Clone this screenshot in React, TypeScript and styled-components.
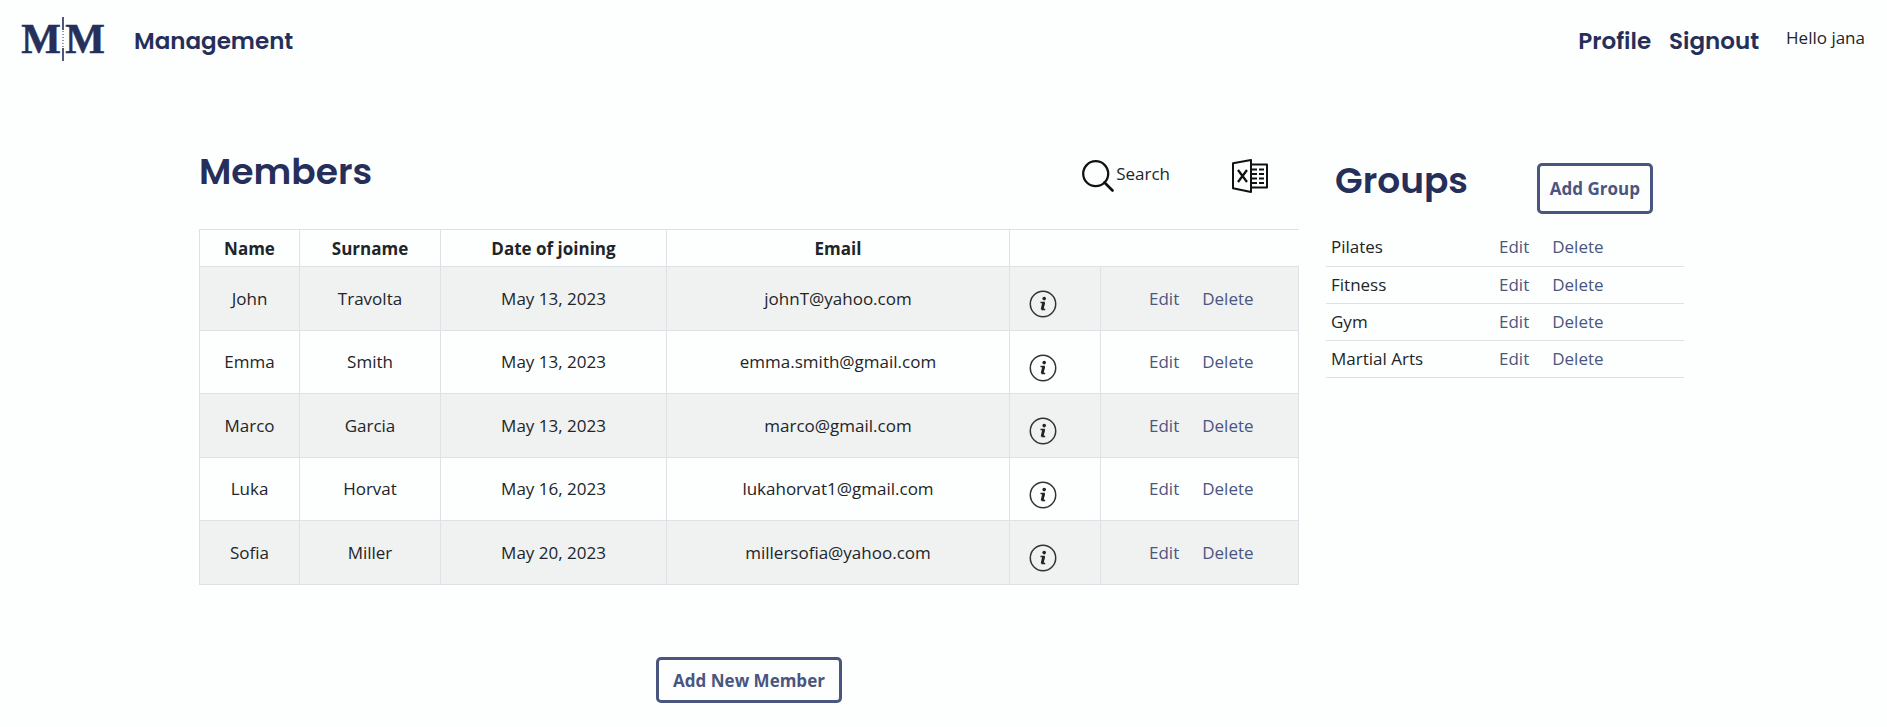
import React from "react";
import styled, { createGlobalStyle } from "styled-components";

const GlobalStyle = createGlobalStyle`
  *, *::before, *::after { box-sizing: border-box; }
  body {
    margin: 0;
    background: #fdfffe;
    color: #212529;
    font-family: "Segoe UI", "Open Sans", "Noto Sans", sans-serif;
    font-size: 17px;
    font-weight: 400;
    line-height: 28px;
  }
`;

const navy = "#262f5a";
const slate = "#4a5680";
const line = "#dee2e6";
const display = `Poppins, Inter, "Open Sans", sans-serif`;

const NavBar = styled.header`
  display: flex;
  align-items: center;
  height: 78px;
  padding: 0 22px 0 18px;
`;

const Nav = styled.nav`
  display: flex;
  flex: 1;
  align-items: center;
  justify-content: space-between;
  margin-left: 26px;
  padding-top: 4px;
`;

const NavGroup = styled.div`
  display: flex;
  gap: 18px;
`;

const NavLink = styled.a`
  color: ${navy};
  font-family: ${display};
  font-size: 23px;
  font-weight: 600;
  text-decoration: none;
`;

const Greeting = styled.span`
  margin-left: 27px;
  padding-bottom: 2px;
`;

const Page = styled.main`
  display: grid;
  grid-template-columns: minmax(0, 1100fr) minmax(0, 358fr);
  column-gap: 27px;
  max-width: 1489px;
  margin: 0 auto;
  padding: 69px 4px 0 0;
`;

const SectionHead = styled.div<{ $inset?: boolean }>`
  display: flex;
  align-items: flex-start;
  justify-content: space-between;
  height: 82px;
  padding: ${(p) => (p.$inset ? "16px 31px 0 9px" : "0 31px 0 0")};
`;

const Title = styled.h1`
  margin: 0;
  color: ${navy};
  font-family: ${display};
  font-size: 36px;
  font-weight: 600;
  line-height: 50px;
`;

const GroupsTitle = styled(Title)`
  line-height: 36px;
`;

const Tools = styled.div`
  display: flex;
  align-items: center;
  gap: 62px;
  padding-top: 8px;
`;

const ToolButton = styled.button`
  display: flex;
  align-items: center;
  gap: 2px;
  padding: 0;
  border: 0;
  background: none;
  color: inherit;
  font: inherit;
  cursor: pointer;

  svg { display: block; margin-top: 4px; }
`;

const OutlineButton = styled.button<{ $tall?: boolean }>`
  height: ${(p) => (p.$tall ? 51 : 46)}px;
  padding: 1px ${(p) => (p.$tall ? 10 : 14)}px 0;
  border: 3px solid ${slate};
  border-radius: 5px;
  background: transparent;
  color: ${slate};
  font: inherit;
  font-weight: 700;
  white-space: nowrap;
  cursor: pointer;
`;

const MembersTable = styled.table`
  width: 100%;
  border-collapse: collapse;
  table-layout: fixed;
  text-align: center;

  th {
    height: 37px;
    padding: 2px 0 0;
    border: 1px solid ${line};
    font-weight: 700;
  }
  th:last-child { border-right-color: transparent; }
  td {
    height: 64px;
    padding: 0;
    border: 1px solid ${line};
  }
  tbody tr:nth-child(odd) { background: #f0f1f1; }
  tbody tr:nth-child(even) td { height: 63px; }
`;

const Column = styled.col<{ $width?: number }>`
  width: ${(p) => (p.$width ? `${p.$width}px` : "auto")};
`;

const InfoButton = styled.button`
  display: block;
  margin: 11px 0 0 19px;
  padding: 0;
  border: 0;
  background: none;
  cursor: pointer;

  svg { display: block; }
`;

const Actions = styled.div<{ $indent?: number }>`
  display: flex;
  gap: 23px;
  padding-left: ${(p) => p.$indent ?? 0}px;
`;

const ActionLink = styled.a`
  color: ${slate};
  text-decoration: none;
`;

const AddRow = styled.div`
  display: flex;
  justify-content: center;
  padding: 72px 0 24px;
`;

const GroupsTable = styled.table`
  width: 100%;
  border-collapse: collapse;
  table-layout: fixed;

  td {
    height: 37px;
    padding: 0 0 0 5px;
    border-bottom: 1px solid ${line};
  }
`;

const LogoLink = styled.a`
  display: block;
  svg { display: block; }
`;

const Logo = () => (
  <LogoLink href="#" aria-label="Home">
    <svg width="90" height="46" viewBox="0 0 90 46" fill={navy} overflow="visible">
      <g
        fontFamily="'Liberation Serif', serif"
        fontWeight="700"
        fontSize="42"
        textAnchor="middle"
        stroke={navy}
        strokeWidth="0.5"
      >
        <text x="23" y="37">M</text>
        <text x="67" y="37">M</text>
      </g>
      <path d="M45 1v13M45 32v13" stroke={navy} strokeWidth="1.6" />
      <path d="M45 15v16" stroke={navy} strokeWidth="1.6" strokeDasharray="1 2" opacity=".6" />
    </svg>
  </LogoLink>
);

const SearchIcon = () => (
  <svg width="32" height="32" viewBox="0 0 32 32" fill="none" stroke="#111" strokeLinecap="round">
    <circle cx="13.7" cy="13.7" r="12.5" strokeWidth="2.3" />
    <path d="M22.5 22.5l8 8" strokeWidth="2.7" />
  </svg>
);

const SheetIcon = () => (
  <svg width="36" height="34" viewBox="0 0 36 34" fill="none" stroke="#111" strokeWidth="2">
    <path d="M1 4.2L19 1v32L1 29.2zM19 5.5h16v23H19" strokeLinejoin="round" />
    <path d="M6 11l9 12M15 11L6 23" strokeWidth="2.3" />
    <path d="M20 10.5h5M27 10.5h5M20 15h5M27 15h5M20 19.5h5M27 19.5h5M20 24h5M27 24h5" />
  </svg>
);

const InfoIcon = () => (
  <svg width="28" height="28" viewBox="0 0 28 28" fill="none">
    <circle cx="14" cy="14" r="12.7" stroke="#333" strokeWidth="1.5" />
    <circle cx="15.2" cy="8.6" r="1.8" fill="#222" />
    <path d="M11.5 12.5h3.5l-1.6 7.1h2.8" stroke="#222" strokeWidth="1.5" />
    <path d="M14.7 12.5l-1.6 7" stroke="#222" strokeWidth="2.8" />
  </svg>
);

const members = [
  ["John", "Travolta", "May 13, 2023", "johnT@yahoo.com"],
  ["Emma", "Smith", "May 13, 2023", "emma.smith@gmail.com"],
  ["Marco", "Garcia", "May 13, 2023", "marco@gmail.com"],
  ["Luka", "Horvat", "May 16, 2023", "lukahorvat1@gmail.com"],
  ["Sofia", "Miller", "May 20, 2023", "millersofia@yahoo.com"],
];

const groups = ["Pilates", "Fitness", "Gym", "Martial Arts"];

const RowActions = ({ indent }: { indent?: number }) => (
  <Actions $indent={indent}>
    <ActionLink href="#">Edit</ActionLink>
    <ActionLink href="#">Delete</ActionLink>
  </Actions>
);

export default function App() {
  return (
    <>
      <GlobalStyle />
      <NavBar>
        <Logo />
        <Nav>
          <NavLink href="#">Management</NavLink>
          <NavGroup>
            <NavLink href="#">Profile</NavLink>
            <NavLink href="#">Signout</NavLink>
          </NavGroup>
        </Nav>
        <Greeting>Hello jana</Greeting>
      </NavBar>
      <Page>
        <section>
          <SectionHead>
            <Title>Members</Title>
            <Tools>
              <ToolButton type="button"><SearchIcon />Search</ToolButton>
              <ToolButton type="button" aria-label="Export to Excel"><SheetIcon /></ToolButton>
            </Tools>
          </SectionHead>
          <MembersTable>
            <colgroup>
              <Column $width={100} />
              <Column $width={141} />
              <Column $width={226} />
              <Column />
              <Column $width={91} />
              <Column $width={198} />
            </colgroup>
            <thead>
              <tr>
                <th>Name</th>
                <th>Surname</th>
                <th>Date of joining</th>
                <th>Email</th>
                <th colSpan={2} />
              </tr>
            </thead>
            <tbody>
              {members.map(([name, surname, joined, email]) => (
                <tr key={email}>
                  <td>{name}</td>
                  <td>{surname}</td>
                  <td>{joined}</td>
                  <td>{email}</td>
                  <td>
                    <InfoButton type="button" aria-label={`Details of ${name}`}><InfoIcon /></InfoButton>
                  </td>
                  <td><RowActions indent={48} /></td>
                </tr>
              ))}
            </tbody>
          </MembersTable>
          <AddRow>
            <OutlineButton type="button">Add New Member</OutlineButton>
          </AddRow>
        </section>
        <section>
          <SectionHead $inset>
            <GroupsTitle as="h2">Groups</GroupsTitle>
            <OutlineButton type="button" $tall>Add Group</OutlineButton>
          </SectionHead>
          <GroupsTable>
            <colgroup>
              <Column $width={168} />
              <Column />
            </colgroup>
            <tbody>
              {groups.map((group) => (
                <tr key={group}>
                  <td>{group}</td>
                  <td><RowActions /></td>
                </tr>
              ))}
            </tbody>
          </GroupsTable>
        </section>
      </Page>
    </>
  );
}
